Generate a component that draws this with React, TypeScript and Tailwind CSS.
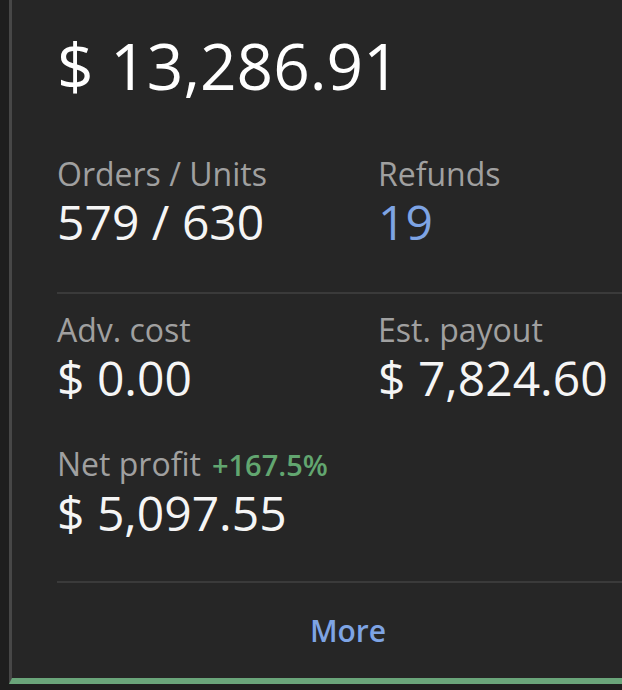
import React from 'react';

function Stat({ label, value, valueClass, extra }: { label: string; value: string; valueClass?: string; extra?: React.ReactNode }) {
  return (
    <div className="flex flex-col">
      <div className="text-[32px] leading-[40px] text-[#a0a0a0] whitespace-nowrap">
        {label}
        {extra}
      </div>
      <div className={`text-[48px] leading-[56px] whitespace-nowrap ${valueClass ?? 'text-[#f5f5f5]'}`}>{value}</div>
    </div>
  );
}

export default function App() {
  return (
    <div
      className="w-[622px] h-[690px] overflow-hidden bg-[#1e1e1e] pl-[9px]"
      style={{ fontFamily: '"Open Sans", "Noto Sans", sans-serif' }}
    >
      <div className="w-[680px] h-[684px] bg-[#262626] border-l-[3px] border-l-[#474747] border-b-[6px] border-b-[#6aa57a] flex flex-col">
        <div className="pl-[45px] pt-[26px]">
          <div className="text-[64px] leading-[80px] text-white whitespace-nowrap">$ 13,286.91</div>

          <div className="grid grid-cols-[321px_1fr] mt-[48px]">
            <Stat label="Orders / Units" value="579 / 630" />
            <Stat label="Refunds" value="19" valueClass="text-[#7ea4e4]" />
          </div>

          <div className="h-[2px] bg-[#3a3a3a] mt-[42px]" />

          <div className="grid grid-cols-[321px_1fr] mt-[16px]">
            <Stat label="Adv. cost" value="$ 0.00" />
            <Stat label="Est. payout" value="$ 7,824.60" />
          </div>

          <div className="mt-[38px]">
            <Stat
              label="Net profit"
              value="$ 5,097.55"
              extra={<span className="ml-[11px] text-[29px] font-semibold text-[#62a670]">+167.5%</span>}
            />
          </div>

          <div className="h-[2px] bg-[#3a3a3a] mt-[40px]" />
        </div>

        <div className="flex-1 flex items-center justify-center pr-[5px]">
          <span className="text-[30px] font-semibold text-[#7ea4e4]">More</span>
        </div>
      </div>
    </div>
  );
}
